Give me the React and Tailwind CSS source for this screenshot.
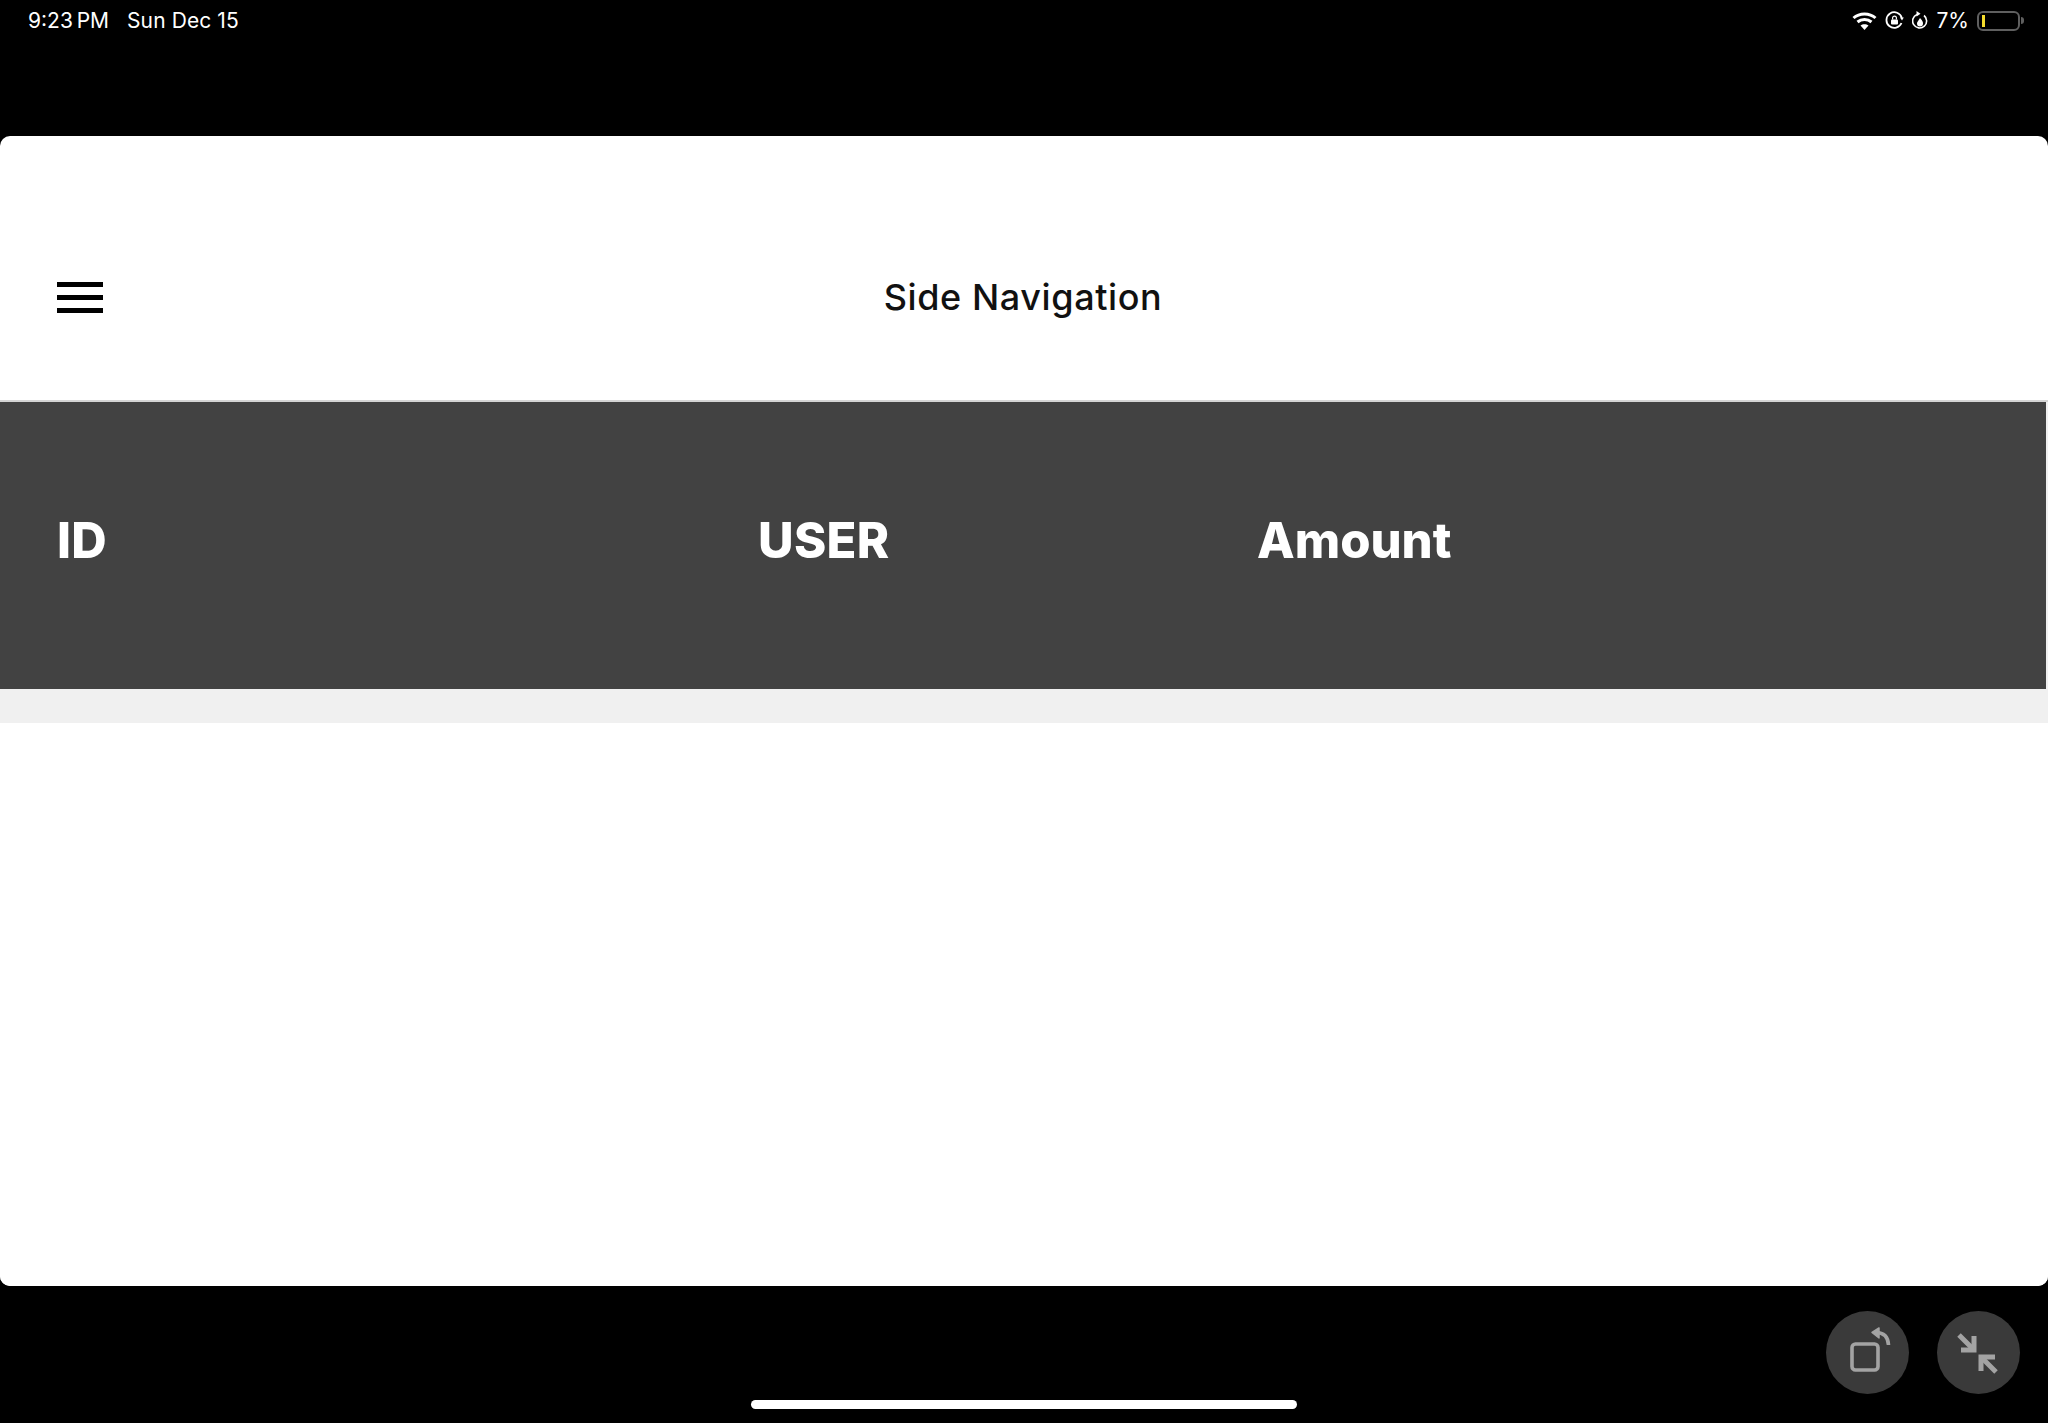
function WifiIcon() {
  return (
    <svg width="25" height="20" viewBox="0 0 25 20" fill="none" stroke="white" strokeWidth="3">
      <path d="M1.5 7 C7.5 1.5 17.5 1.5 23.5 7" />
      <path d="M5.5 11 C9.5 7.5 15.5 7.5 19.5 11" />
      <path d="M12.5 19 L8.5 14.6 C10.8 12.8 14.2 12.8 16.5 14.6 Z" fill="white" stroke="none" />
    </svg>
  );
}

function RotationLockIcon() {
  return (
    <svg width="19" height="19" viewBox="0 0 19 19" fill="none" stroke="white" strokeWidth="1.8">
      <path d="M16.5 12 A7.8 7.8 0 1 1 16.8 7" />
      <path d="M15 6.5 L18.8 6.5 L17 9.5 Z" fill="white" stroke="none" />
      <rect x="6" y="8.5" width="7" height="5" rx="1" fill="white" stroke="none" />
      <path d="M7.6 8.5 V7 A1.9 1.9 0 0 1 11.4 7 V8.5" strokeWidth="1.2" />
    </svg>
  );
}

function ScreenTimeIcon() {
  return (
    <svg width="16" height="21" viewBox="0 0 16 21" fill="none" stroke="white" strokeWidth="1.6">
      <path d="M5 4.5 A7 7 0 1 0 12 5.5" />
      <path d="M4.5 1 L8.5 3.8 L4.5 6.5 Z" fill="white" stroke="none" />
      <path d="M8 8 C10.5 10.5 11 12 11 13.5 A3 3 0 0 1 5 13.5 C5 12 6.5 10.5 8 8 Z" fill="white" stroke="none" />
    </svg>
  );
}

function BatteryIcon() {
  return (
    <div className="flex items-center gap-[1px]">
      <div className="w-[43px] h-[20px] rounded-[6px] border-2 border-[#5f5f5f] p-[2px] flex">
        <div className="w-[3px] h-full bg-[#f5dc2d] ml-[1px]" />
      </div>
      <div className="w-[3px] h-[7px] rounded-r-full bg-[#5f5f5f]" />
    </div>
  );
}

function RotateButton() {
  return (
    <button className="w-[83px] h-[83px] rounded-full bg-[#3a3a3a] flex items-center justify-center">
      <svg width="83" height="83" viewBox="0 0 83 83" fill="none" stroke="#a3a3a3" strokeWidth="3.6">
        <rect x="26" y="33" width="26" height="26" rx="3.5" />
        <path d="M50 21.5 C57 21.5 62 25 62.5 34" />
        <path d="M46 21.5 L53 17 L53 27 Z" fill="#a3a3a3" stroke="#a3a3a3" strokeWidth="1.5" strokeLinejoin="round" />
      </svg>
    </button>
  );
}

function ShrinkButton() {
  return (
    <button className="w-[83px] h-[83px] rounded-full bg-[#3a3a3a] flex items-center justify-center">
      <svg width="83" height="83" viewBox="0 0 83 83" fill="none" stroke="#a3a3a3" strokeWidth="5">
        <path d="M22 24 L37 39" />
        <path d="M37 25 V39 H24" />
        <path d="M59 61 L44 46" />
        <path d="M44 60 V46 H58" />
      </svg>
    </button>
  );
}

export default function App() {
  return (
    <div className="relative h-[1423px] flex flex-col bg-black font-['Inter',sans-serif] overflow-hidden">
      {/* status bar */}
      <div className="h-[136px] shrink-0 flex justify-between items-start pl-[28px] pr-[24px] pt-[8px] text-white text-[21px] leading-[25px]">
        <div className="flex gap-[18px]">
          <span>9:23&#8201;PM</span>
          <span className="tracking-[0.1px]">Sun Dec 15</span>
        </div>
        <div className="flex items-center gap-[8px] h-[25px]">
          <WifiIcon />
          <RotationLockIcon />
          <ScreenTimeIcon />
          <span>7%</span>
          <BatteryIcon />
        </div>
      </div>

      {/* main card */}
      <div className="h-[1150px] shrink-0 rounded-[10px] bg-white overflow-hidden flex flex-col">
        <div className="h-[266px] shrink-0 border-b-2 border-[#d4d4d4] pt-[58px] flex items-center relative">
          <div className="pl-[57px] flex flex-col gap-[8px]">
            <div className="w-[46px] h-[5px] bg-black" />
            <div className="w-[46px] h-[5px] bg-black" />
            <div className="w-[46px] h-[5px] bg-black" />
          </div>
          <div className="absolute left-0 right-[2px] top-[58px] bottom-0 flex items-center justify-center text-[36px] font-medium text-[#111] tracking-[0.6px]">
            Side Navigation
          </div>
        </div>

        <div className="bg-[#f0f0f0] pb-[34px] pr-[2px]">
          <div className="h-[287px] bg-[#424242] flex items-center pl-[57px] pb-[10px] text-white text-[49px] font-extrabold">
            <div className="w-[701px] tracking-[0.3px]">ID</div>
            <div className="w-[499px] tracking-[0.3px]">USER</div>
            <div>Amount</div>
          </div>
        </div>

        <div className="flex-1 bg-white" />
      </div>

      {/* bottom controls */}
      <div className="flex-1 flex justify-end gap-[28px] pt-[25px] pr-[28px]">
        <RotateButton />
        <ShrinkButton />
      </div>

      <div className="absolute left-[751px] bottom-[14px] w-[546px] h-[9px] rounded-full bg-white" />
    </div>
  );
}
